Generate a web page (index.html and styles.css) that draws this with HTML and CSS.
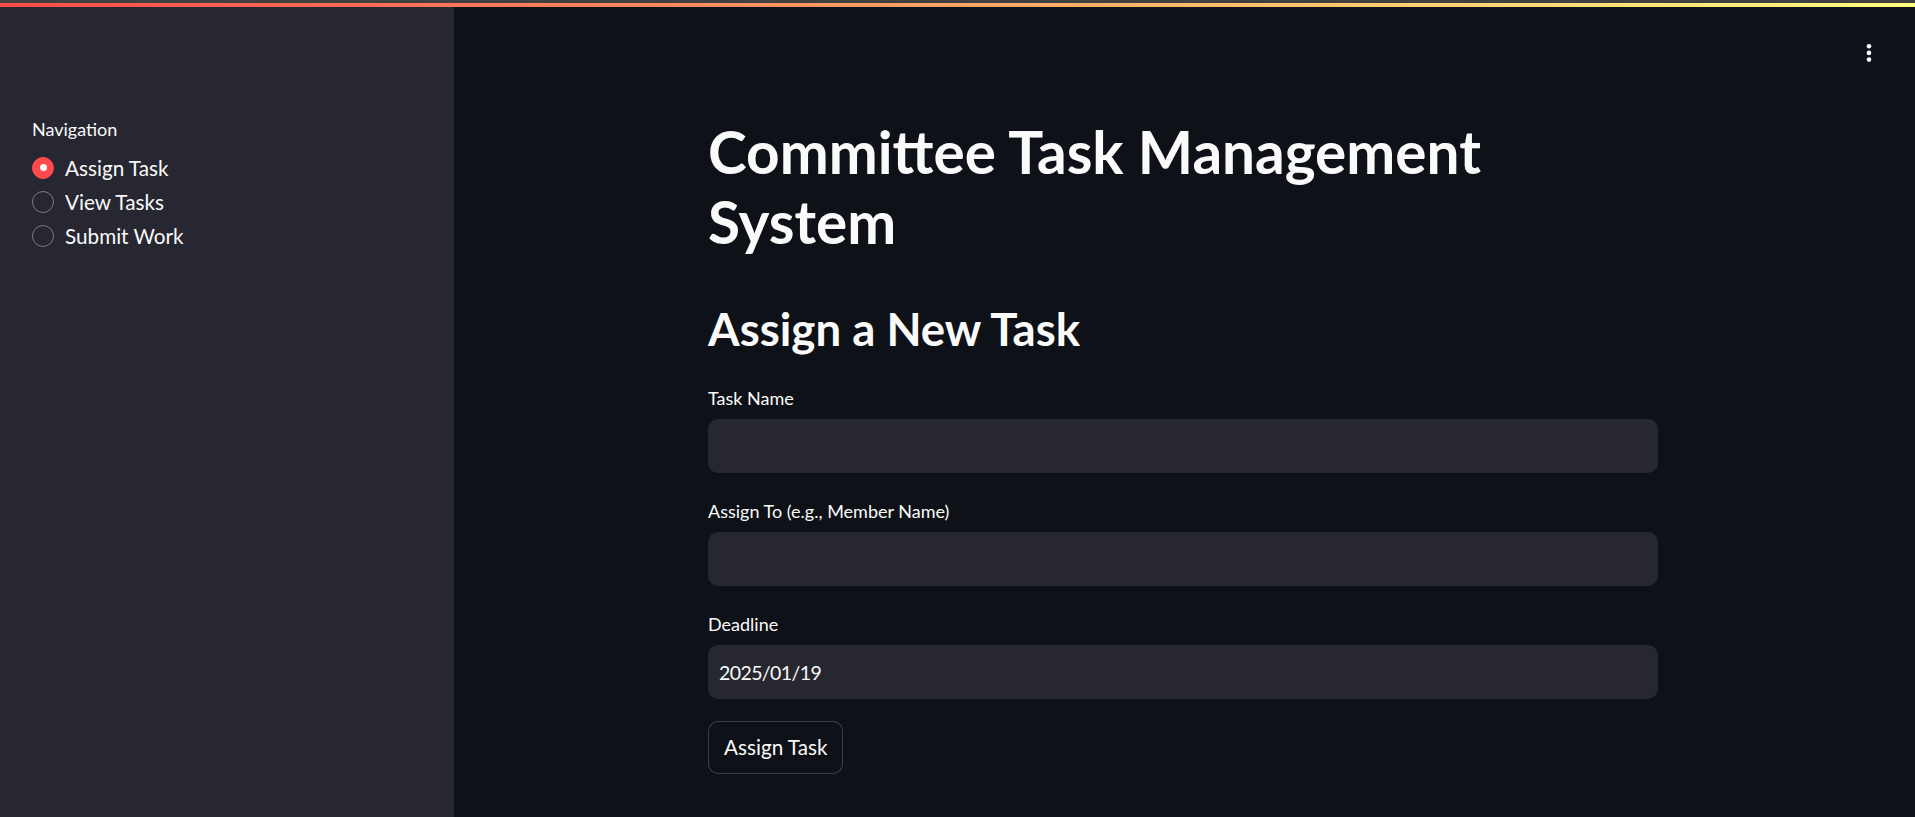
FILE: index.html
```html
<!DOCTYPE html>
<html lang="en">
<head>
<meta charset="utf-8">
<title>Committee Task Management System</title>
<link rel="stylesheet" href="styles.css">
</head>
<body>
<div class="app">
  <div class="decoration"><div class="deco-gray"></div><div class="deco-grad"></div></div>
  <div class="shell">
    <aside class="sidebar">
      <div class="widget-label">Navigation</div>
      <div class="radio-group">
        <label class="radio-option"><span class="radio-dot checked"></span><span class="radio-text">Assign Task</span></label>
        <label class="radio-option"><span class="radio-dot"></span><span class="radio-text">View Tasks</span></label>
        <label class="radio-option"><span class="radio-dot"></span><span class="radio-text">Submit Work</span></label>
      </div>
    </aside>
    <main class="main">
      <button class="menu-btn" aria-label="Main menu">
        <svg width="6" height="20" viewBox="0 0 6 20"><circle cx="3" cy="3.2" r="2.3" fill="#fafafa"/><circle cx="3" cy="9.9" r="2.3" fill="#fafafa"/><circle cx="3" cy="16.6" r="2.3" fill="#fafafa"/></svg>
      </button>
      <div class="block">
        <h1 class="title">Committee Task Management System</h1>
        <h2 class="subtitle">Assign a New Task</h2>
        <div class="field">
          <div class="widget-label">Task Name</div>
          <div class="input"></div>
        </div>
        <div class="field">
          <div class="widget-label">Assign To (e.g., Member Name)</div>
          <div class="input"></div>
        </div>
        <div class="field">
          <div class="widget-label">Deadline</div>
          <div class="input"><span class="input-value">2025/01/19</span></div>
        </div>
        <div class="field">
          <button class="btn">Assign Task</button>
        </div>
      </div>
    </main>
  </div>
</div>
</body>
</html>
```
FILE: styles.css
```css
* { box-sizing: border-box; }
html, body { margin: 0; padding: 0; height: 100%; }
body {
  background: #0e1117;
  color: #fafafa;
  font-family: Lato, "Noto Sans", sans-serif;
  overflow: hidden;
}
.app { display: flex; flex-direction: column; height: 100vh; }
.decoration { flex: 0 0 auto; }
.deco-gray { height: 3px; background: #404040; }
.deco-grad { height: 4px; background: linear-gradient(90deg, #ff4b4b, #fffd80); }
.shell { flex: 1; display: flex; min-height: 0; }
.sidebar {
  width: 454px;
  flex: 0 0 454px;
  background: #262730;
  padding: 106px 32px 0 32px;
}
.widget-label {
  font-size: 18px;
  line-height: 32px;
  min-height: 32px;
  margin-bottom: 5.5px;
  color: #fafafa;
  display: flex;
  align-items: center;
}
.radio-group { display: flex; flex-direction: column; }
.radio-option {
  display: flex;
  align-items: center;
  height: 34.3px;
  gap: 11px;
}
.radio-dot {
  width: 22px; height: 22px;
  border-radius: 50%;
  border: 1.5px solid rgba(250,250,250,0.4);
  flex: 0 0 22px;
  display: flex; align-items: center; justify-content: center;
}
.radio-dot.checked {
  background: #ff4b4b;
  border-color: #ff4b4b;
}
.radio-dot.checked::after {
  content: "";
  width: 7px; height: 7px; border-radius: 50%;
  background: #fafafa;
}
.radio-text { font-size: 20.7px; line-height: 34px; }
.main {
  flex: 1;
  position: relative;
  display: flex;
  justify-content: center;
  padding-top: 109px;
  padding-right: 3px;
}
.menu-btn {
  position: absolute;
  top: 34px; right: 40px;
  width: 12px; height: 24px;
  background: none; border: 0; padding: 0;
  display: flex; align-items: center; justify-content: center;
}
.block { width: 950px; display: flex; flex-direction: column; gap: 21.6px; }
.title {
  margin: 0;
  font-size: 58.5px;
  line-height: 70px;
  font-weight: 700;
  width: 850px;
}
.subtitle {
  margin: 22px 0 2.5px 0;
  font-size: 45.6px;
  line-height: 58px;
  font-weight: 700;
}
.field { display: flex; flex-direction: column; }
.input {
  height: 54px;
  background: #262730;
  border-radius: 10px;
  display: flex; align-items: center;
  padding-left: 11px;
}
.input-value { font-size: 19.5px; letter-spacing: -0.6px; }
.btn {
  align-self: flex-start;
  height: 53px;
  padding: 0 15px;
  background: #0e1117;
  border: 1px solid rgba(250,250,250,0.2);
  border-radius: 10px;
  color: #fafafa;
  font-family: inherit;
  font-size: 20.7px;
}
```
